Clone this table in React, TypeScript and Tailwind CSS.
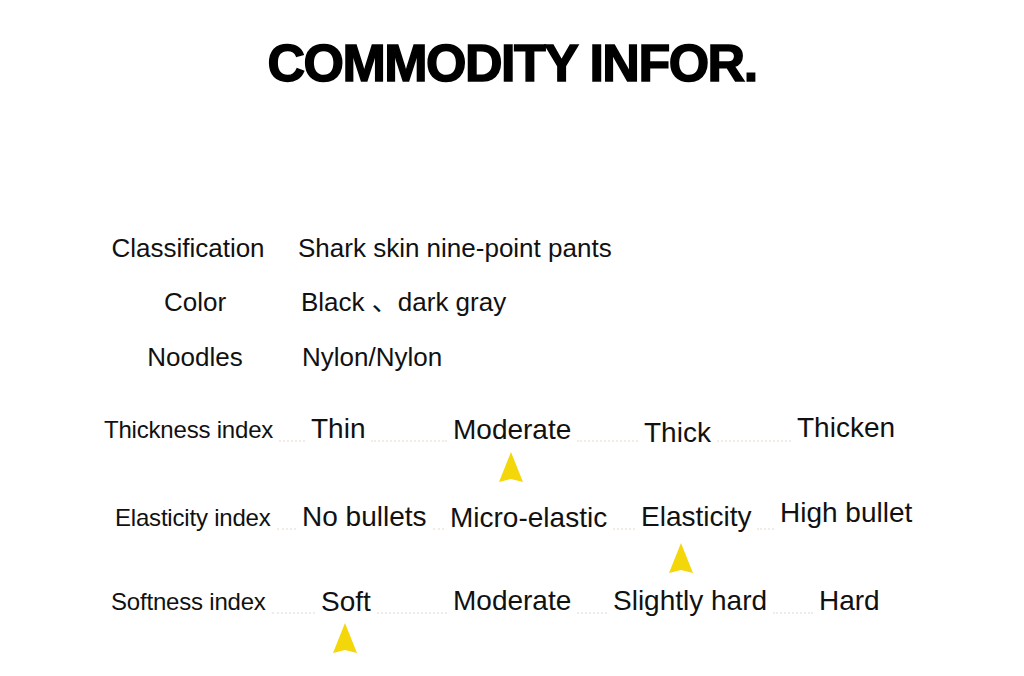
const sans = "font-['Liberation_Sans','Noto_Sans_CJK_SC',sans-serif]";

type Opt = { text: string; box?: string; shift?: string };

const indexRows: {
  label: string;
  pad: string;
  labelBox: string;
  height: string;
  opts: Opt[];
  arrow: string;
}[] = [
  {
    label: 'Thickness index',
    pad: 'pl-[104px]',
    labelBox: 'w-[207px]',
    height: 'h-[36px]',
    opts: [
      { text: 'Thin', box: 'w-[142px]' },
      { text: 'Moderate', box: 'w-[191px]', shift: 'translate-y-[1px]' },
      { text: 'Thick', box: 'w-[153px]', shift: 'translate-y-[4px]' },
      { text: 'Thicken', shift: '-translate-y-[1px]' },
    ],
    arrow: 'h-[52px] pl-[499px] pt-[1px]',
  },
  {
    label: 'Elasticity index',
    pad: 'pl-[115px]',
    labelBox: 'w-[187px]',
    height: 'h-[40px]',
    opts: [
      { text: 'No bullets', box: 'w-[148px]' },
      { text: 'Micro-elastic', box: 'w-[191px]', shift: 'translate-y-[1px]' },
      { text: 'Elasticity', box: 'w-[139px]' },
      { text: 'High bullet', shift: '-translate-y-[4px]' },
    ],
    arrow: 'h-[44px] pl-[669px]',
  },
  {
    label: 'Softness index',
    pad: 'pl-[111px]',
    labelBox: 'w-[210px]',
    height: 'h-[36px]',
    opts: [
      { text: 'Soft', box: 'w-[132px]', shift: 'translate-y-[1px]' },
      { text: 'Moderate', box: 'w-[160px]' },
      { text: 'Slightly hard', box: 'w-[206px]' },
      { text: 'Hard' },
    ],
    arrow: 'h-[40px] pl-[333px]',
  },
];

const basics = [
  { label: 'Classification', value: 'Shark skin nine-point pants', height: 'h-[54px]', labelBox: 'ml-[95px] w-[186px]', gap: 'ml-[17px]' },
  { label: 'Color', value: 'Black 、dark gray', height: 'h-[55px]', labelBox: 'ml-[100px] w-[190px]', gap: 'ml-[11px]' },
  { label: 'Noodles', value: 'Nylon/Nylon', height: 'h-[71px]', labelBox: 'ml-[100px] w-[190px]', gap: 'ml-[12px]' },
];

function Dots() {
  return <div className="flex-1 mx-[6px] translate-y-[4px] border-b-2 border-dotted border-[#f3ebe5]" />;
}

function Pointer() {
  return (
    <svg width="24" height="30" viewBox="0 0 24 30">
      <path d="M12 0 L24 30 L12 27 L0 30 Z" fill="#f4d70a" />
    </svg>
  );
}

export default function App() {
  return (
    <div className={`w-[1024px] h-[676px] bg-white overflow-hidden text-[#111] leading-none ${sans}`}>
      <h1 className="pt-[37px] h-[90px] text-center text-[52px] font-bold tracking-[-1.5px] text-black [-webkit-text-stroke:1.5px_black]">
        COMMODITY INFOR.
      </h1>

      <div className="mt-[145px]">
        {basics.map((row) => (
          <div key={row.label} className={`flex items-baseline text-[26px] ${row.height}`}>
            <div className={`text-center ${row.labelBox}`}>{row.label}</div>
            <div className={`whitespace-nowrap ${row.gap}`}>{row.value}</div>
          </div>
        ))}
      </div>

      {indexRows.map((row) => (
        <div key={row.label}>
          <div className={`flex items-baseline ${row.pad} ${row.height}`}>
            <div className={`flex items-baseline ${row.labelBox}`}>
              <span className="text-[24px] tracking-[-0.2px] whitespace-nowrap">{row.label}</span>
              <Dots />
            </div>
            {row.opts.map((o) => (
              <div key={o.text} className={`flex items-baseline ${o.box ?? ''}`}>
                <span className={`text-[28px] whitespace-nowrap ${o.shift ?? ''}`}>{o.text}</span>
                {o.box && <Dots />}
              </div>
            ))}
          </div>
          <div className={row.arrow}>
            <Pointer />
          </div>
        </div>
      ))}
    </div>
  );
}
